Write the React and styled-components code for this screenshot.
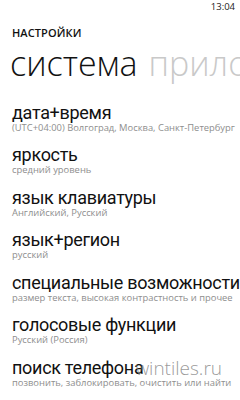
import React from "react";
import styled, { createGlobalStyle } from "styled-components";

const GlobalStyle = createGlobalStyle`
  html, body {
    margin: 0;
    padding: 0;
    background: #ffffff;
  }
  body {
    font-family: "Open Sans", "Noto Sans", sans-serif;
    color: #111111;
  }
`;

const Screen = styled.div`
  position: relative;
  width: 240px;
  height: 400px;
  overflow: hidden;
  background: #ffffff;
  display: flex;
  flex-direction: column;
`;

const StatusBar = styled.div`
  display: flex;
  justify-content: flex-end;
  padding: 1px 5px 0 0;
  font-size: 9.5px;
  line-height: 12px;
  color: #222222;
`;

const AppTitle = styled.div`
  margin: 13px 0 0 12px;
  font-size: 11px;
  line-height: 13px;
  font-weight: 600;
  letter-spacing: 0.1px;
  color: #111111;
`;

const Pivot = styled.div`
  display: flex;
  gap: 11px;
  margin: 3.5px 0 0 10px;
  white-space: nowrap;
`;

const PivotItem = styled.span`
  font-size: 34px;
  line-height: 40px;
  font-weight: 300;
  color: ${(p) => (p.$active ? "#111111" : "#c9c9c9")};
`;

const List = styled.div`
  display: flex;
  flex-direction: column;
  gap: 13.5px;
  margin: 21px 0 0 12px;
`;

const Row = styled.div`
  display: flex;
  flex-direction: column;
  white-space: nowrap;
`;

const Title = styled.div`
  font-family: Roboto, "Open Sans", sans-serif;
  font-size: 18px;
  line-height: 18px;
  font-weight: 400;
  letter-spacing: -0.3px;
  color: #111111;
`;

const Sub = styled.div`
  font-size: 9.4px;
  line-height: 11px;
  color: #8e8e8e;
`;

const Watermark = styled.div`
  position: absolute;
  right: 18px;
  top: 355px;
  font-size: 19px;
  font-weight: 300;
  color: rgba(120, 120, 120, 0.75);
`;

const items = [
  ["дата+время", "(UTC+04:00) Волгоград, Москва, Санкт-Петербург"],
  ["яркость", "средний уровень"],
  ["язык клавиатуры", "Английский, Русский"],
  ["язык+регион", "русский"],
  ["специальные возможности", "размер текста, высокая контрастность и прочее"],
  ["голосовые функции", "Русский (Россия)"],
  ["поиск телефона", "позвонить, заблокировать, очистить или найти"],
];

export default function App() {
  return (
    <>
      <GlobalStyle />
      <Screen>
        <StatusBar>13:04</StatusBar>
        <AppTitle>НАСТРОЙКИ</AppTitle>
        <Pivot>
          <PivotItem $active>система</PivotItem>
          <PivotItem>приложения</PivotItem>
        </Pivot>
        <List>
          {items.map(([title, sub]) => (
            <Row key={title}>
              <Title>{title}</Title>
              <Sub>{sub}</Sub>
            </Row>
          ))}
        </List>
        <Watermark>wintiles.ru</Watermark>
      </Screen>
    </>
  );
}
